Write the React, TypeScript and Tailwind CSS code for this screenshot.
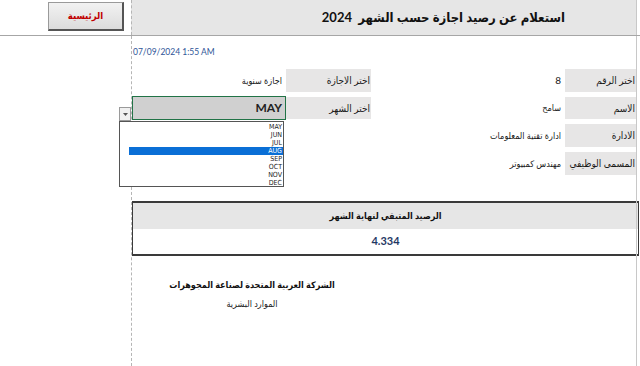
import React from "react";

const ar = { fontFamily: 'Lato, "DejaVu Sans Condensed", "DejaVu Sans", sans-serif' };

function LabelBox({ children }: { children: React.ReactNode }) {
  return (
    <div className="h-full bg-[#e7e6e6] flex items-center justify-end pr-[1px] text-[10px] text-[#1a1a1a] whitespace-nowrap">
      {children}
    </div>
  );
}

function Value({ children }: { children?: React.ReactNode }) {
  return (
    <div className="h-full flex items-center justify-end pr-[4px] text-[9px] text-[#1a1a1a] whitespace-nowrap">
      {children}
    </div>
  );
}

export default function App() {
  const months = ["MAY", "JUN", "JUL", "AUG", "SEP", "OCT", "NOV", "DEC"];
  return (
    <div dir="ltr" className="relative w-[640px] h-[366px] bg-white overflow-hidden" style={ar}>
      {/* Header */}
      <div className="flex h-[36px] border-b border-[#a6a6a6]">
        <div className="w-[131px] pt-[2px] pl-[48px]">
          <div className="w-[76px] h-[29px] flex items-center justify-center bg-[linear-gradient(#f2f2f2,#dcdcdc)] border border-[#9a9a9a] border-r-[#555] border-b-[#555] border-r-2 border-b-2 text-[9.5px] font-bold text-[#c00000]">
            الرئيسية
          </div>
        </div>
        <div className="w-[505px] bg-[#e6e6e6] border-l border-dashed border-[#b5b5b5] flex items-center justify-end pr-[71px]">
          <span dir="rtl" className="text-[13px] font-bold text-[#111] whitespace-nowrap">
            استعلام عن رصيد اجازة حسب الشهر&nbsp; 2024
          </span>
        </div>
        <div className="w-[4px] border-l border-[#c8c8c8]" />
      </div>

      {/* Body */}
      <div className="flex h-[330px]">
        <div className="w-[131px]" />
        <div className="w-[505px] border-l border-dashed border-[#b5b5b5] flex flex-col">
          <div className="pt-[10px] pl-[1px] text-[8.5px] text-[#2f5597] h-[33px]">07/09/2024 1:55 AM</div>

          <div className="grid grid-cols-[154px_85px_194px_71px] grid-rows-[23px_22px_23px_23px] gap-y-[5px]">
            {/* row 1 */}
            <Value>
              <span dir="rtl">اجازة سنوية</span>
            </Value>
            <LabelBox>
              <span dir="rtl">اختر الاجازة</span>
            </LabelBox>
            <Value>
              <span className="text-[10px]">8</span>
            </Value>
            <LabelBox>
              <span dir="rtl">اختر الرقم</span>
            </LabelBox>

            {/* row 2 */}
            <div className="h-[24px] -mt-[1px] border-[1.5px] border-[#217346] bg-[#d0d0d0] bg-[radial-gradient(#b0b0b0_0.6px,transparent_0.7px)] bg-[length:2px_2px] flex items-center justify-end pr-[3px] text-[12px] font-bold text-[#222]">
              MAY
            </div>
            <LabelBox>
              <span dir="rtl">اختر الشهر</span>
            </LabelBox>
            <Value>
              <span dir="rtl">سامح</span>
            </Value>
            <LabelBox>
              <span dir="rtl">الاسم</span>
            </LabelBox>

            {/* row 3 */}
            <div />
            <div />
            <Value>
              <span dir="rtl">ادارة تقنية المعلومات</span>
            </Value>
            <LabelBox>
              <span dir="rtl">الادارة</span>
            </LabelBox>

            {/* row 4 */}
            <div />
            <div />
            <Value>
              <span dir="rtl">مهندس كمبيوتر</span>
            </Value>
            <LabelBox>
              <span dir="rtl">المسمى الوظيفي</span>
            </LabelBox>
          </div>

          {/* Result box */}
          <div className="mt-[26px] mr-[-3px] border-t-2 border-b-2 border-l border-r border-[#3a3a3a] flex flex-col">
            <div className="h-[26px] bg-[#e6e6e6] flex items-center justify-center text-[9px] font-bold text-[#111]">
              <span dir="rtl">الرصيد المتبقي لنهاية الشهر</span>
            </div>
            <div className="h-[25px] bg-white flex items-center justify-center text-[11px] font-bold text-[#1f3864]">
              4.334
            </div>
          </div>

          {/* Footer */}
          <div className="w-[240px] mt-[22px] flex flex-col items-center">
            <div dir="rtl" className="text-[9px] font-bold text-[#111] whitespace-nowrap">
              الشركة العربية المتحدة لصناعة المجوهرات
            </div>
            <div dir="rtl" className="mt-[5px] text-[9px] text-[#222] whitespace-nowrap">
              الموارد البشرية
            </div>
          </div>
        </div>
        <div className="w-[4px] border-l border-[#c8c8c8]" />
      </div>

      {/* Dropdown arrow button */}
      <div className="absolute left-[119px] top-[107px] w-[12px] h-[14px] bg-[#f0f0f0] border border-[#9a9a9a] flex items-center justify-center">
        <svg width="5" height="3" viewBox="0 0 5 3">
          <path d="M0 0 H5 L2.5 3 Z" fill="#555" />
        </svg>
      </div>

      {/* Dropdown list */}
      <div className="absolute left-[119px] top-[121px] w-[165px] h-[66px] bg-white border border-[#555] pt-[1px] flex flex-col">
        {months.map((m) => (
          <div
            key={m}
            className={
              m === "AUG"
                ? "h-[8px] shrink-0 ml-[9px] bg-[#0a6fd6] text-white text-[7px] leading-none flex items-center justify-end pr-[1px] overflow-hidden"
                : "h-[8px] shrink-0 ml-[9px] text-[#222] text-[7px] leading-none flex items-center justify-end pr-[1px] overflow-hidden"
            }
            style={{ fontFamily: '"DejaVu Sans Condensed", "DejaVu Sans", sans-serif' }}
          >
            {m}
          </div>
        ))}
      </div>
    </div>
  );
}
